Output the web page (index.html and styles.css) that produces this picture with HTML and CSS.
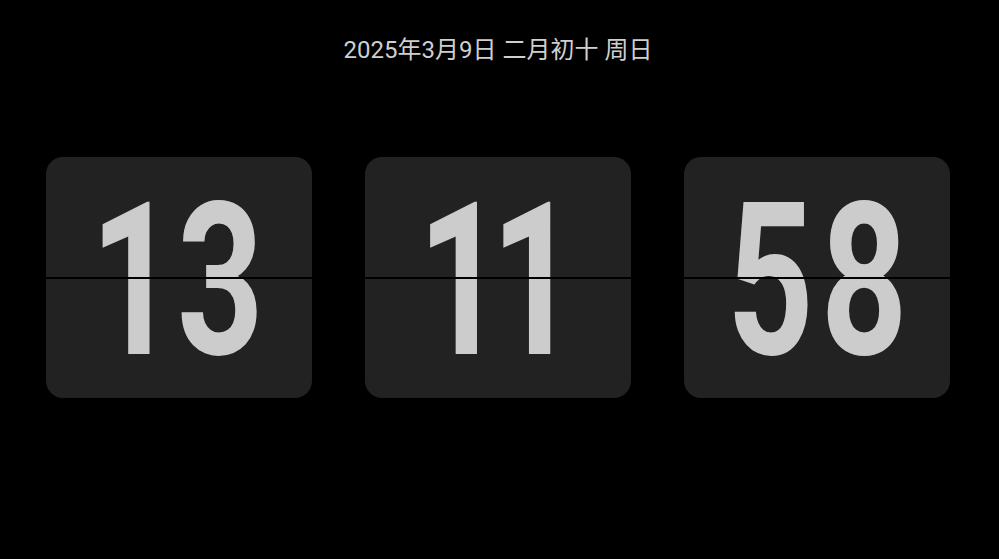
FILE: index.html
```html
<!DOCTYPE html>
<html lang="zh-CN">
<head>
<meta charset="utf-8">
<title>Flip Clock</title>
<link rel="stylesheet" href="styles.css">
</head>
<body>
<main class="page">
  <div class="date">2025年3月9日 二月初十 周日</div>
  <div class="clock">
    <div class="card">
      <div class="digits hours">13</div>
    </div>
    <div class="card">
      <div class="digits minutes">11</div>
    </div>
    <div class="card">
      <div class="digits seconds">58</div>
    </div>
  </div>
</main>
</body>
</html>
```

FILE: styles.css
```css
html, body {
  margin: 0;
  padding: 0;
  background: #000;
}

body {
  width: 999px;
  height: 559px;
  overflow: hidden;
}

.page {
  display: flex;
  flex-direction: column;
  align-items: center;
  padding: 34px 3px 0 0;
}

.date {
  font-family: Roboto, "Noto Sans CJK SC", sans-serif;
  font-size: 24px;
  line-height: 32px;
  color: #cfcfcf;
}

.clock {
  display: flex;
  gap: 53px;
  margin-top: 91px;
}

.card {
  position: relative;
  width: 266px;
  height: 241px;
  border-radius: 17px;
  background: #222222;
  display: flex;
  justify-content: center;
  align-items: center;
}

.card::after {
  content: "";
  position: absolute;
  left: 0;
  right: 0;
  top: 120px;
  height: 2px;
  background: #000;
}

.digits {
  margin-top: 8px;
  font-family: Roboto, "Liberation Sans", sans-serif;
  font-weight: 700;
  font-size: 213px;
  line-height: 1;
  color: #cccccc;
  white-space: nowrap;
  transform: scaleX(0.71);
}

.hours {
  padding-right: 6px;
}

.minutes {
  letter-spacing: -19px;
  padding-right: 19px;
}

.seconds {
  letter-spacing: 10px;
  padding-left: 10px;
}
```
